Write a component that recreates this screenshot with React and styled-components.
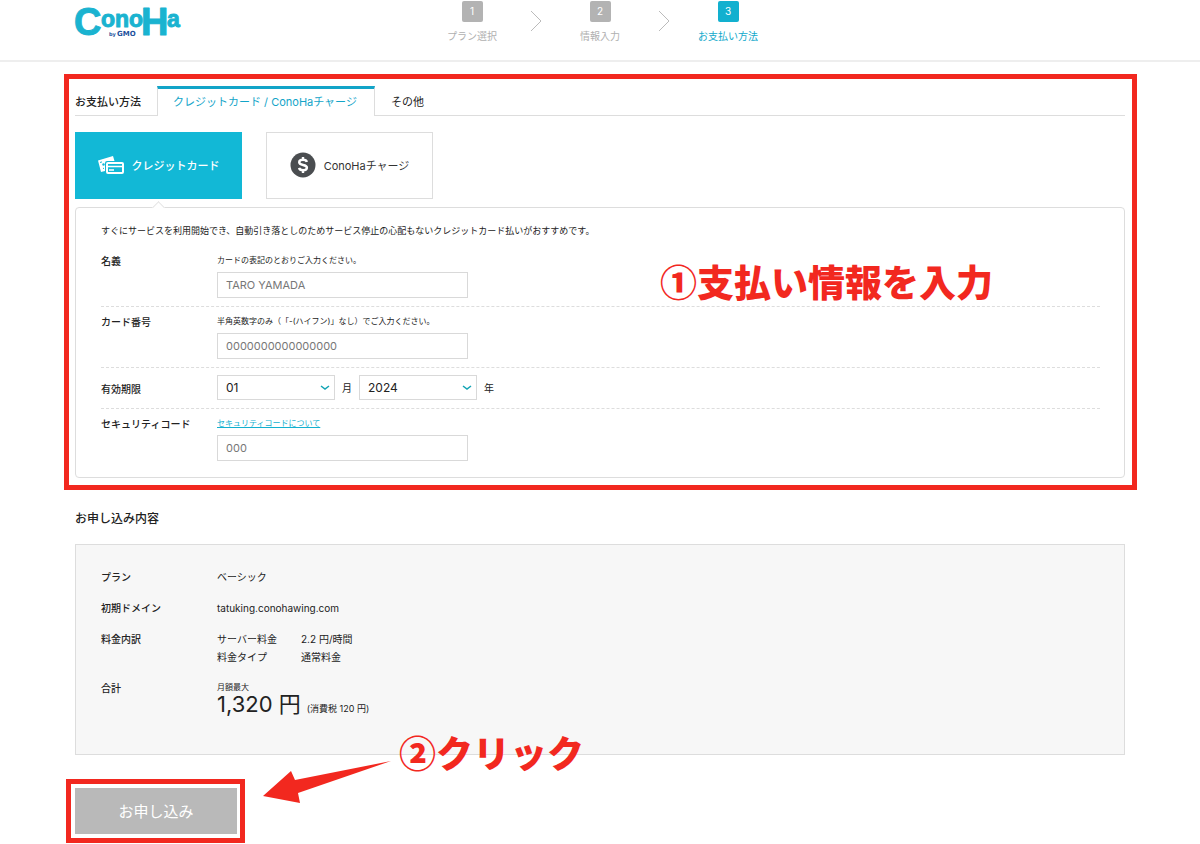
import React from 'react';
import styled, { createGlobalStyle, css } from 'styled-components';

const GlobalStyle = createGlobalStyle`
  * {
    box-sizing: border-box;
  }

  body {
    margin: 0;
    background: #fff;
    color: #222;
    font-family: Inter, 'Noto Sans CJK JP', sans-serif;
    font-size: 10px;
    line-height: 18px;
  }
`;

const Header = styled.header`
  display: grid;
  grid-template-columns: 1fr auto 1fr;
  height: 62px;
  padding: 0 75px;
  border-bottom: 2px solid #eee;
`;

const LogoLink = styled.a`
  display: block;
  width: 106px;
  height: 42px;

  svg {
    overflow: visible;
  }
`;

const Steps = styled.ol`
  display: flex;
  margin: 0;
  padding: 1px 0 0;
  list-style: none;
`;

const Step = styled.li`
  display: flex;
  flex-direction: column;
  align-items: center;
  gap: 5px;
  width: 64px;
  color: ${props => (props.$active ? '#12a9cb' : '#b0b0b0')};
  white-space: nowrap;
`;

const StepNumber = styled.span`
  width: 21px;
  height: 21px;
  border-radius: 2px;
  background: ${props => (props.$active ? '#12b0cf' : '#b3b3b3')};
  color: #fff;
  line-height: 21px;
  text-align: center;
`;

const StepArrow = styled.li`
  width: 64px;
  padding-top: 9px;
  text-align: center;
`;

const Main = styled.main`
  padding: 12px 63px 0 64px;
`;

const PaymentFrame = styled.section`
  padding: 7px 7px 7px 6px;
  border: 5px solid #f2281f;
`;

const TabRow = styled.div`
  display: flex;
  height: 30px;
  color: #222;
  font-size: 11px;
`;

const TabTitle = styled.h2`
  width: 82px;
  margin: 0;
  border-bottom: 1px solid #ddd;
  font-size: 11px;
  font-weight: 500;
  line-height: 32px;
  white-space: nowrap;
`;

const Tab = styled.button`
  padding: 2px 16px 0;
  border: 0;
  border-bottom: 1px solid #ddd;
  background: none;
  color: inherit;
  font: inherit;
  text-align: left;
  white-space: nowrap;

  ${props => props.$active && css`
    width: 218px;
    padding: 0 15px 1px;
    border: 1px solid #ddd;
    border-top: 3px solid #12a4c8;
    border-bottom: 0;
    color: #12a4c8;
  `}

  ${props => props.$grow && css`
    flex: 1;
  `}
`;

const Methods = styled.div`
  display: flex;
  gap: 24px;
  margin-top: 16px;
`;

const Method = styled.button`
  display: flex;
  align-items: center;
  justify-content: center;
  gap: 8px;
  width: 167px;
  height: 67px;
  padding: 0 0 2px;
  border: 1px solid ${props => (props.$active ? '#12b8d6' : '#ddd')};
  background: ${props => (props.$active ? '#12b8d6' : '#fff')};
  color: ${props => (props.$active ? '#fff' : '#333')};
  font-family: inherit;
  font-size: 11px;
  font-weight: ${props => (props.$active ? 500 : 400)};
`;

const Panel = styled.div`
  position: relative;
  margin-top: 8px;
  padding: 14px 24px 8px 25px;
  border: 1px solid #ddd;
  border-radius: 4px;

  &::before {
    content: '';
    position: absolute;
    top: -5px;
    left: 78px;
    width: 8px;
    height: 8px;
    border: 1px solid #e4e4e4;
    border-right: 0;
    border-bottom: 0;
    background: #fff;
    transform: rotate(45deg);
  }
`;

const Lead = styled.p`
  margin: 0 0 6px;
  font-size: 9px;
`;

const FormRow = styled.div`
  display: grid;
  grid-template-columns: 116px 1fr;
  padding: ${props => (props.$compact ? '7px 0 8px' : '6px 0 8px')};

  &:not(:last-child) {
    border-bottom: 1px dashed #ddd;
  }
`;

const Label = styled.label`
  padding-top: ${props => (props.$compact ? '5px' : '0')};
  font-weight: 500;
`;

const Note = styled.p`
  margin: 0 0 4px;
  font-size: 8px;
  line-height: 16px;
  text-spacing-trim: space-all;
`;

const NoteLink = styled.a`
  color: #12b0cf;
`;

const TextInput = styled.input`
  display: block;
  width: 251px;
  height: 26px;
  padding: 0 8px;
  border: 1px solid #d9d9d9;
  color: #333;
  font-family: inherit;
  font-size: 11px;

  &::placeholder {
    color: #777;
  }
`;

const Expiry = styled.div`
  display: flex;
  align-items: center;
  gap: 7px;
`;

const SelectBox = styled.span`
  display: grid;
  width: 118px;

  select,
  svg {
    grid-area: 1 / 1;
  }

  svg {
    align-self: center;
    justify-self: end;
    margin-right: 5px;
    pointer-events: none;
  }
`;

const Select = styled.select`
  appearance: none;
  height: 25px;
  padding: 0 8px;
  border: 1px solid #d9d9d9;
  border-radius: 0;
  background: #fff;
  color: #222;
  font-family: inherit;
  font-size: 12px;
`;

const SummaryTitle = styled.h2`
  margin: 20px 11px 16px;
  font-size: 12px;
  font-weight: 500;
`;

const Summary = styled.dl`
  display: grid;
  grid-template-columns: 116px 1fr;
  row-gap: 13px;
  margin: 0 12px 0 11px;
  padding: 23px 24px 36px 25px;
  border: 1px solid #ddd;
  background: #f7f7f7;

  dt {
    font-weight: 500;
  }

  dd {
    margin: 0;
  }
`;

const Breakdown = styled.div`
  display: grid;
  grid-template-columns: 84px 1fr;
`;

const TotalNote = styled.div`
  font-size: 8px;
  line-height: 16px;
`;

const Total = styled.div`
  font-size: 22px;
  line-height: 18px;

  small {
    margin-left: 6px;
    font-size: 9px;
  }
`;

const Actions = styled.div`
  display: flex;
  margin: 24px 2px 0;
`;

const SubmitFrame = styled.div`
  padding: 4px 3px 4px 4px;
  border: 5px solid #f2281f;
`;

const SubmitButton = styled.button`
  display: block;
  width: 162px;
  height: 46px;
  padding: 0 0 2px;
  border: 0;
  background: #b9b9b9;
  color: #fff;
  font-family: inherit;
  font-size: 15px;
`;

const Callout = styled.p`
  position: absolute;
  top: ${props => props.$top}px;
  left: ${props => props.$left}px;
  margin: 0;
  color: #f2281f;
  font-family: 'Noto Sans CJK JP', sans-serif;
  font-size: 37px;
  font-weight: 900;
  line-height: 48px;
  white-space: nowrap;
`;

const Arrow = styled.svg`
  position: absolute;
  top: 758px;
  left: 262px;
`;

const Logo = () => (
  <svg width="106" height="42" viewBox="0 0 106 42" role="img" aria-label="ConoHa by GMO">
    <text
      x="-1"
      y="35"
      fill="#1ab3d0"
      stroke="#1ab3d0"
      strokeWidth="1"
      strokeLinejoin="round"
      fontFamily="'Liberation Sans', sans-serif"
      fontWeight="700"
      fontSize="38"
    >
      C
      <tspan x="26" y="27" fontSize="23">ono</tspan>
      <tspan x="66" y="35">H</tspan>
      <tspan x="92" y="27" fontSize="23">a</tspan>
    </text>
    <text x="34" y="36" fill="#1c4f9c" fontFamily="'DejaVu Sans', sans-serif" fontWeight="700" fontSize="7">
      <tspan fontSize="5">by</tspan>
      <tspan x="42">GMO</tspan>
    </text>
  </svg>
);

const Chevron = () => (
  <svg width="12" height="22" viewBox="0 0 12 22" fill="none" stroke="#bbb">
    <path d="M1 1l10 10L1 21" />
  </svg>
);

const CardIcon = () => (
  <svg width="26" height="20" viewBox="0 0 26 20" fill="none">
    <path d="M0 5.500L15 1l1.500 5H9a2 2 0 0 0-2 2v8l-4 1z" fill="#fff" />
    <path d="M2 7.500l2-.6M5 13.500l1-.3" stroke="#12b8d6" />
    <circle cx="5.500" cy="9.500" r="1.200" fill="#12b8d6" />
    <rect x="9" y="8" width="16" height="10" rx="1" fill="#12b8d6" stroke="#fff" strokeWidth="2" />
    <path d="M9 11.500h16M11 15h5" stroke="#fff" strokeWidth="1.500" />
  </svg>
);

const DollarIcon = () => (
  <svg width="26" height="26" viewBox="0 0 26 26" fill="none">
    <circle cx="13" cy="13" r="12.500" fill="#4a4d50" />
    <path
      d="M16.800 10C16.500 8.500 15 7.800 13 7.800c-2.200 0-3.800.9-3.800 2.500 0 3.800 7.700 1.600 7.700 5.400 0 1.600-1.700 2.500-3.900 2.500-2 0-3.500-.7-3.900-2.300M13 5v3M13 18v3"
      stroke="#fff"
      strokeWidth="2.400"
    />
  </svg>
);

const DropDown = ({ id, label, value }) => (
  <SelectBox>
    <Select id={id} aria-label={label} defaultValue={value}>
      <option>{value}</option>
    </Select>
    <svg width="10" height="6" viewBox="0 0 10 6" fill="none" stroke="#12a4b4" strokeWidth="1.500">
      <path d="M1 1l4 3 4-3" />
    </svg>
  </SelectBox>
);

const App = () => {
  return (
    <>
      <GlobalStyle />
      <Header>
        <LogoLink href="#">
          <Logo />
        </LogoLink>
        <Steps>
          <Step>
            <StepNumber>1</StepNumber>
            プラン選択
          </Step>
          <StepArrow><Chevron /></StepArrow>
          <Step>
            <StepNumber>2</StepNumber>
            情報入力
          </Step>
          <StepArrow><Chevron /></StepArrow>
          <Step $active>
            <StepNumber $active>3</StepNumber>
            お支払い方法
          </Step>
        </Steps>
      </Header>
      <Main>
        <PaymentFrame>
          <TabRow>
            <TabTitle>お支払い方法</TabTitle>
            <Tab type="button" $active>クレジットカード / ConoHaチャージ</Tab>
            <Tab type="button" $grow>その他</Tab>
          </TabRow>
          <Methods>
            <Method type="button" $active>
              <CardIcon />
              クレジットカード
            </Method>
            <Method type="button">
              <DollarIcon />
              ConoHaチャージ
            </Method>
          </Methods>
          <Panel>
            <Lead>すぐにサービスを利用開始でき、自動引き落としのためサービス停止の心配もないクレジットカード払いがおすすめです。</Lead>
            <FormRow>
              <Label htmlFor="holder">名義</Label>
              <div>
                <Note>カードの表記のとおりご入力ください。</Note>
                <TextInput id="holder" placeholder="TARO YAMADA" />
              </div>
            </FormRow>
            <FormRow>
              <Label htmlFor="number">カード番号</Label>
              <div>
                <Note>半角英数字のみ（「-(ハイフン)」なし）でご入力ください。</Note>
                <TextInput id="number" placeholder="0000000000000000" />
              </div>
            </FormRow>
            <FormRow $compact>
              <Label htmlFor="month" $compact>有効期限</Label>
              <Expiry>
                <DropDown id="month" value="01" />
                <span>月</span>
                <DropDown id="year" label="年" value="2024" />
                <span>年</span>
              </Expiry>
            </FormRow>
            <FormRow>
              <Label htmlFor="code">セキュリティコード</Label>
              <div>
                <Note><NoteLink href="#">セキュリティコードについて</NoteLink></Note>
                <TextInput id="code" placeholder="000" />
              </div>
            </FormRow>
          </Panel>
        </PaymentFrame>

        <SummaryTitle>お申し込み内容</SummaryTitle>
        <Summary>
          <dt>プラン</dt>
          <dd>ベーシック</dd>
          <dt>初期ドメイン</dt>
          <dd>tatuking.conohawing.com</dd>
          <dt>料金内訳</dt>
          <dd>
            <Breakdown>
              <span>サーバー料金</span>
              <span>2.2 円/時間</span>
              <span>料金タイプ</span>
              <span>通常料金</span>
            </Breakdown>
          </dd>
          <dt>合計</dt>
          <dd>
            <TotalNote>月額最大</TotalNote>
            <Total>1,320 円<small>(消費税 120 円)</small></Total>
          </dd>
        </Summary>

        <Actions>
          <SubmitFrame>
            <SubmitButton type="button">お申し込み</SubmitButton>
          </SubmitFrame>
        </Actions>
      </Main>

      <Callout $top={257} $left={660}>①支払い情報を入力</Callout>
      <Callout $top={728} $left={399}>②クリック</Callout>
      <Arrow width="130" height="48" viewBox="0 0 130 48" fill="#f2281f">
        <path d="M129 3L33 22L29 13L1 38L38 45L36 35Z" />
      </Arrow>
    </>
  );
};

export default App;
